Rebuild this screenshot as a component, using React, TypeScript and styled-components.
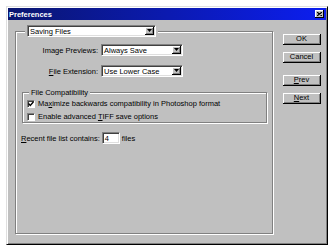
import styled, { createGlobalStyle } from 'styled-components';

const GlobalStyle = createGlobalStyle`
  html, body {
    margin: 0;
    background: #fff;
  }
  body {
    font-family: "Liberation Sans", Arial, sans-serif;
    font-size: 7.5px;
    color: #000;
  }
`;

const Dialog = styled.div`
  box-sizing: border-box;
  margin: 6px 0 0 6px;
  width: 322px;
  height: 239px;
  display: flex;
  flex-direction: column;
  padding: 1px;
  background: #c0c0c0;
  border: 1px solid;
  border-color: #dfdfdf #000 #000 #dfdfdf;
  box-shadow: inset 1px 1px 0 #fff, inset -1px -1px 0 #808080;
`;

const TitleBar = styled.div`
  height: 12px;
  display: flex;
  align-items: center;
  justify-content: space-between;
  padding: 0 2px 0 1px;
  background: linear-gradient(to right, #0a1670, #0c1ef0);
  color: #fff;
  font-weight: bold;
`;

const CloseButton = styled.span`
  box-sizing: border-box;
  width: 9px;
  height: 8px;
  display: flex;
  align-items: center;
  justify-content: center;
  background: #c0c0c0;
  border-right: 1px solid #000;
  border-bottom: 1px solid #000;
  box-shadow: inset 1px 1px 0 #fff;
`;

const Body = styled.div`
  flex: 1;
  display: flex;
  gap: 10px;
  padding: 5px 5px 9px 7px;
`;

const GroupBox = styled.fieldset`
  box-sizing: border-box;
  width: 258px;
  min-width: 0;
  margin: 0;
  padding: 7px 5px 0 6px;
  border: 1px solid #808080;
  box-shadow: 1px 1px 0 #fff, inset 1px 1px 0 #fff;
`;

const ComboLegend = styled.legend`
  padding: 0 2px;
  margin-left: 3px;
  background: #c0c0c0;
`;

const Combo = styled.div<{ $width: number }>`
  box-sizing: border-box;
  width: ${(p) => p.$width}px;
  height: 12px;
  display: flex;
  align-items: stretch;
  padding: 1px;
  background: #fff;
  border: 1px solid;
  border-color: #808080 #fff #fff #808080;
  box-shadow: inset 1px 1px 0 #404040, inset -1px -1px 0 #dfdfdf;
`;

const ComboText = styled.span`
  flex: 1;
  display: flex;
  align-items: center;
  padding-left: 1px;
  white-space: nowrap;
`;

const ComboArrow = styled.span`
  box-sizing: border-box;
  width: 9px;
  display: flex;
  align-items: center;
  justify-content: center;
  background: #c0c0c0;
  border-right: 1px solid #000;
  border-bottom: 1px solid #000;
  box-shadow: inset 1px 1px 0 #fff, inset -1px -1px 0 #808080;
`;

const FieldGrid = styled.div`
  display: grid;
  grid-template-columns: 76px 82px;
  column-gap: 3px;
  row-gap: 9px;
  align-items: center;
`;

const FieldLabel = styled.label`
  text-align: right;
  white-space: nowrap;
`;

const CompatGroup = styled.fieldset`
  min-width: 0;
  margin: 11px 0 0 0;
  padding: 2px 4px 1px 4px;
  border: 1px solid #808080;
  box-shadow: 1px 1px 0 #fff, inset 1px 1px 0 #fff;
`;

const TextLegend = styled.legend`
  padding: 0 2px;
  margin-left: 2px;
  line-height: 9px;
  background: #c0c0c0;
`;

const CheckList = styled.div`
  display: flex;
  flex-direction: column;
  gap: 4px;
`;

const CheckRow = styled.label`
  display: flex;
  align-items: center;
  gap: 3px;
  height: 9px;
  white-space: nowrap;
`;

const CheckBox = styled.span`
  box-sizing: border-box;
  width: 8px;
  height: 8px;
  display: flex;
  align-items: center;
  justify-content: center;
  background: #fff;
  border: 1px solid;
  border-color: #808080 #fff #fff #808080;
  box-shadow: inset 1px 1px 0 #404040;
`;

const RecentRow = styled.div`
  display: flex;
  align-items: center;
  gap: 2px;
  margin-top: 9px;
  margin-left: -1px;
  white-space: nowrap;
`;

const NumberBox = styled.span`
  box-sizing: border-box;
  width: 18px;
  height: 12px;
  display: flex;
  align-items: center;
  padding-left: 2px;
  background: #fff;
  border: 1px solid;
  border-color: #808080 #fff #fff #808080;
  box-shadow: inset 1px 1px 0 #404040, inset -1px -1px 0 #dfdfdf;
`;

const ButtonColumn = styled.div`
  display: flex;
  flex-direction: column;
  padding-top: 9px;
`;

const Button = styled.button<{ $gap?: number }>`
  box-sizing: border-box;
  width: 38px;
  height: 11px;
  margin: ${(p) => p.$gap ?? 0}px 0 0 0;
  padding: 0;
  font: inherit;
  line-height: 1;
  color: #000;
  background: #c0c0c0;
  border: none;
  border-right: 1px solid #000;
  border-bottom: 1px solid #000;
  box-shadow: inset 1px 1px 0 #fff, inset -1px -1px 0 #808080;
`;

const Arrow = () => (
  <svg width="5" height="3" viewBox="0 0 5 3">
    <path d="M0 0h5L2.5 3z" fill="#000" />
  </svg>
);

const Select = ({ width, value }: { width: number; value: string }) => (
  <Combo $width={width}>
    <ComboText>{value}</ComboText>
    <ComboArrow>
      <Arrow />
    </ComboArrow>
  </Combo>
);

export default function App() {
  return (
    <>
      <GlobalStyle />
      <Dialog>
        <TitleBar>
          <span>Preferences</span>
          <CloseButton>
            <svg width="5" height="4" viewBox="0 0 5 4">
              <path d="M0 0L5 4M5 0L0 4" stroke="#000" strokeWidth="1.2" />
            </svg>
          </CloseButton>
        </TitleBar>
        <Body>
          <GroupBox>
            <ComboLegend>
              <Select width={129} value="Saving Files" />
            </ComboLegend>
            <FieldGrid>
              <FieldLabel>Image Previews:</FieldLabel>
              <Select width={82} value="Always Save" />
              <FieldLabel>
                <u>F</u>ile Extension:
              </FieldLabel>
              <Select width={82} value="Use Lower Case" />
            </FieldGrid>
            <CompatGroup>
              <TextLegend>File Compatibility</TextLegend>
              <CheckList>
                <CheckRow>
                  <CheckBox>
                    <svg width="6" height="6" viewBox="0 0 6 6">
                      <path d="M0.5 2.5L2.3 4.5L5.5 0.8" stroke="#000" strokeWidth="1.3" fill="none" />
                    </svg>
                  </CheckBox>
                  <span>
                    Ma<u>x</u>imize backwards compatibility in Photoshop format
                  </span>
                </CheckRow>
                <CheckRow>
                  <CheckBox />
                  <span>
                    Enable advanced <u>T</u>IFF save options
                  </span>
                </CheckRow>
              </CheckList>
            </CompatGroup>
            <RecentRow>
              <span>
                <u>R</u>ecent file list contains:
              </span>
              <NumberBox>4</NumberBox>
              <span>files</span>
            </RecentRow>
          </GroupBox>
          <ButtonColumn>
            <Button>OK</Button>
            <Button $gap={7}>Cancel</Button>
            <Button $gap={12}>
              <u>P</u>rev
            </Button>
            <Button $gap={7}>
              <u>N</u>ext
            </Button>
          </ButtonColumn>
        </Body>
      </Dialog>
    </>
  );
}
